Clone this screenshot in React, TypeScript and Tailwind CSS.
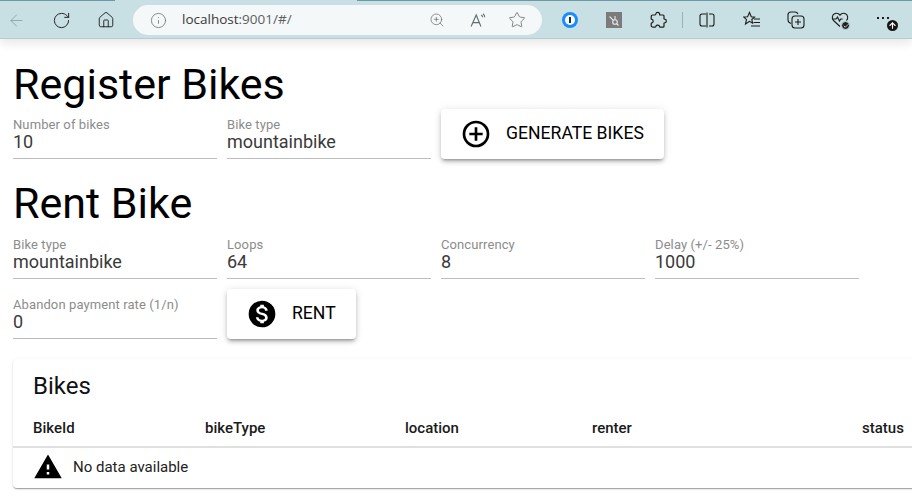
import React from "react";
import { ArrowLeft, RotateCw, House, Info, ZoomIn, Star, ArrowUp, Check } from "lucide-react";

const roboto = "font-['Roboto',sans-serif]";

function Field({ label, value }: { label: string; value: string }) {
  return (
    <div className="w-[204px] h-[50px] border-b border-[#bdbdbd] flex flex-col">
      <span className="text-[13px] leading-[14px] mt-[9px] text-[#8c8c8c] tracking-[0.1px]">{label}</span>
      <span className="text-[18px] leading-[20px] text-[#3a3a3a]">{value}</span>
    </div>
  );
}

function ActionButton({ icon, label, className }: { icon: React.ReactNode; label: string; className: string }) {
  return (
    <button className={`h-[50px] rounded bg-white flex items-center shadow-[0_3px_3px_-2px_rgba(0,0,0,0.3),0_3px_4px_0_rgba(0,0,0,0.16),0_1px_8px_0_rgba(0,0,0,0.12)] text-[17.6px] font-normal text-black ${className}`}>
      {icon}
      <span className="mb-[2px]">{label}</span>
    </button>
  );
}

function ReadAloud() {
  return (
    <svg width="17" height="17" viewBox="0 0 20 20" fill="none" stroke="#5f6b6e" strokeWidth="1.3">
      <path d="M2.500 17 8.500 3.500 14 17M4.500 12.500h8" />
      <path d="M14.500 3.500c1 .8 1.500 1.700 1.500 2.800M16.500 2c1.300 1 2 2.500 2 4.200" />
    </svg>
  );
}

function Toolbar() {
  return (
    <div className="relative h-[39px] pt-[2px] bg-[#c8dfe3] border-b border-[#b4cdd2] flex items-center shadow-[0_4px_10px_rgba(0,0,0,0.10)]">
      <div className="absolute left-0 top-0 w-[115px] h-px bg-[#6b9aa5]" />
      <div className="absolute left-[357px] right-0 top-0 h-px bg-[#6b9aa5]" />
      <ArrowLeft className="ml-[7px] text-[#8a9a9e]" size={19} strokeWidth={1} />
      <RotateCw className="ml-[26px] text-[#1c1c1c]" size={19} strokeWidth={1.2} />
      <House className="ml-[26px] text-[#1c1c1c]" size={18} strokeWidth={1.2} />
      <div className="ml-[18px] w-[409px] h-[30px] rounded-full bg-[#f4f8f9] flex items-center">
        <Info className="ml-[17px] text-[#6c6c6c]" size={17} strokeWidth={1.1} />
        <span className="ml-[15px] text-[13.5px] font-['Open_Sans',sans-serif] text-[#3a3a3a] leading-none">
          localhost<span className="text-[#5e5e5e]">:9001/#/</span>
        </span>
        <ZoomIn className="ml-[137px] text-[#6c6c6c]" size={16} strokeWidth={1.1} />
        <span className="ml-[24px] flex"><ReadAloud /></span>
        <Star className="ml-[22px] text-[#6c6c6c]" size={18} strokeWidth={1.1} />
      </div>
      <div className="ml-[20px] w-[16px] h-[16px] rounded-full bg-[#1a8cff] flex items-center justify-center">
        <div className="w-[10px] h-[10px] rounded-full bg-white flex items-center justify-center">
          <div className="w-[2px] h-[6px] bg-[#1c2b4a]" />
        </div>
      </div>
      <div className="ml-[28px] w-[16px] h-[16px] bg-[#7b7b7b] flex items-center justify-center">
        <svg width="14" height="14" viewBox="0 0 14 14" fill="none" stroke="#e8e8e8" strokeWidth="1.1">
          <circle cx="8" cy="9" r="2.300" />
          <path d="M6.400 7.400 2.500 3.500M8 6.700V3M10 11l1.500 1.500" />
        </svg>
      </div>
      <svg className="ml-[27px]" width="18" height="18" viewBox="0 0 18 18" fill="none" stroke="#1c1c1c" strokeWidth="1.2">
        <path d="M7 2.500C7.200 1.200 9.800 1 10.500 2.500c.2.600 0 1.200.3 1.500h3.200c.6 0 1 .4 1 1v2.800c0 .5.700.4 1.200.5 1.500.4 1.500 3 0 3.400-.5.100-1.200 0-1.200.5v3c0 .6-.4 1-1 1H11c-.6 0-.3-1-.8-1.500-1-1-3-.6-3.400.8-.2.500-.3.700-.8.700H4c-1 0-1.800-.8-1.800-1.800V12.500c0-.5.600-.5 1-.7 1.300-.6 1.300-2.700 0-3.300-.4-.2-1-.2-1-.7V5.500c0-.8.600-1.500 1.500-1.500H6c.6 0 .9-.7 1-1.500z" />
      </svg>
      <div className="ml-[15px] w-px h-[16px] bg-[#9db0b4]" />
      <svg className="ml-[16px]" width="16" height="16" viewBox="0 0 16 16" fill="none" stroke="#1c1c1c" strokeWidth="1.1">
        <path d="M7 2H3a2 2 0 0 0-2 2v8a2 2 0 0 0 2 2h4M10 2h3a2 2 0 0 1 2 2v8a2 2 0 0 1-2 2h-3M8 .5v15" />
      </svg>
      <svg className="ml-[28px]" width="17" height="18" viewBox="0 0 17 18" fill="none" stroke="#1c1c1c" strokeWidth="1.1">
        <path d="M6.500 1.500 8.300 5.800l3.200.3-2.700 2.400.8 3.700-3.100-1.900L2.500 13l1-4.300L.7 6l3.900-.3z" />
        <path d="M11 8h6M10.500 11.500H17M8 15h9" />
      </svg>
      <svg className="ml-[27px]" width="18" height="18" viewBox="0 0 18 18" fill="none" stroke="#1c1c1c" strokeWidth="1.1">
        <path d="M4 12.500C2.500 12 1 11 1 9V4a3 3 0 0 1 3-3h4c1.500 0 2.500.8 3 2" />
        <rect x="5" y="5" width="12" height="12" rx="3" />
        <path d="M11 8v6M8 11h6" />
      </svg>
      <div className="relative ml-[26px] w-[18px] h-[18px]">
        <svg width="18" height="18" viewBox="0 0 18 18" fill="none" stroke="#1c1c1c" strokeWidth="1.1">
          <path d="M9 15.500 2.500 9.500C.5 7.500 1 3.500 4 2.500c2-.6 4 .2 5 1.700 1-1.500 3-2.300 5-1.700 3 1 3.500 5 1.500 7" />
          <path d="M1.500 8h3.500l1.500-2 2 4 1.200-2h2" />
        </svg>
        <div className="absolute right-[-1px] bottom-[-1px] w-[9px] h-[9px] rounded-full bg-[#222] border border-[#c8dfe3] flex items-center justify-center">
          <Check className="text-white" size={6} strokeWidth={3} />
        </div>
      </div>
      <div className="relative ml-[28px] w-[21px] h-[20px]">
        <div className="absolute left-0 top-[7px] flex gap-[3px]">
          <div className="w-[2px] h-[2px] bg-[#1c1c1c]" />
          <div className="w-[2px] h-[2px] bg-[#1c1c1c]" />
          <div className="w-[2px] h-[2px] bg-[#1c1c1c]" />
        </div>
        <div className="absolute left-[10px] top-[10px] w-[11px] h-[11px] rounded-full bg-[#161616] flex items-center justify-center">
          <ArrowUp className="text-white" size={9} strokeWidth={3} />
        </div>
      </div>
    </div>
  );
}

function Th({ label, className }: { label: string; className: string }) {
  return <div className={`text-[15px] font-medium text-[#1a1a1a] ${className}`}>{label}</div>;
}

export default function App() {
  return (
    <div className={`w-[912px] h-[497px] overflow-hidden bg-white ${roboto}`}>
      <Toolbar />
      <div className="pl-[13px]">
        <h1 className="text-[43px] leading-[48px] mt-[21px] text-black">Register Bikes</h1>
        <div className="flex gap-[10px] mt-[1px]">
          <Field label="Number of bikes" value="10" />
          <Field label="Bike type" value="mountainbike" />
          <ActionButton
            className="w-[223px] pl-[19px]"
            label="GENERATE BIKES"
            icon={
              <svg className="mr-[14px]" width="32" height="32" viewBox="0 0 24 24" fill="#000">
                <path d="M12 2a10 10 0 1 0 0 20 10 10 0 0 0 0-20m0 18a8 8 0 1 1 0-16 8 8 0 0 1 0 16m1-13h-2v4H7v2h4v4h2v-4h4v-2h-4z" />
              </svg>
            }
          />
        </div>
        <h1 className="text-[43px] leading-[48px] mt-[20px] text-black">Rent Bike</h1>
        <div className="flex gap-[10px] mt-[2px]">
          <Field label="Bike type" value="mountainbike" />
          <Field label="Loops" value="64" />
          <Field label="Concurrency" value="8" />
          <Field label="Delay (+/- 25%)" value="1000" />
        </div>
        <div className="flex gap-[10px] mt-[10px]">
          <Field label="Abandon payment rate (1/n)" value="0" />
          <ActionButton
            className="w-[129px] pl-[19px]"
            label="RENT"
            icon={
              <svg className="mr-[14px]" width="32" height="32" viewBox="0 0 24 24" fill="#000">
                <path d="M12 2a10 10 0 1 0 0 20 10 10 0 0 0 0-20m1.400 15.900V19h-2.700v-1.100c-1.700-.4-3.100-1.500-3.300-3.400h2c.1 1 .8 1.800 2.600 1.800 1.900 0 2.300-1 2.300-1.500 0-.8-.4-1.500-2.600-2-2.400-.6-4-1.600-4-3.600 0-1.700 1.300-2.700 3-3.100V5h2.700v1.100c1.900.5 2.800 1.900 2.900 3.400h-2c-.1-1.100-.6-1.800-2.200-1.800-1.500 0-2.400.7-2.400 1.600 0 .8.600 1.300 2.600 1.800s4 1.400 4 3.800c0 1.700-1.300 2.700-2.900 3z" />
              </svg>
            }
          />
        </div>
        <div className="mt-[20px] w-[1000px] h-[129px] rounded bg-white shadow-[0_2px_1px_-1px_rgba(0,0,0,0.2),0_1px_1px_0_rgba(0,0,0,0.14),0_1px_3px_0_rgba(0,0,0,0.12)]">
          <div className="pl-[20px] pt-[11px] text-[24px] leading-[32px] text-[#111]">Bikes</div>
          <div className="h-[43px] flex items-center border-b-2 border-[#e0e0e0] pl-[20px] pt-[5px] mt-[3px]">
            <Th label="BikeId" className="w-[172px]" />
            <Th label="bikeType" className="w-[200px]" />
            <Th label="location" className="w-[187px]" />
            <Th label="renter" className="w-[270px]" />
            <Th label="status" className="w-[60px]" />
          </div>
          <div className="flex items-center pl-[20px] h-[38px]">
            <svg className="mr-[10px]" width="30" height="30" viewBox="0 0 24 24" fill="#000">
              <path d="M1 21h22L12 2zm12-3h-2v-2h2zm0-4h-2v-4h2z" />
            </svg>
            <span className="text-[15px] text-[#222]">No data available</span>
          </div>
        </div>
      </div>
    </div>
  );
}
